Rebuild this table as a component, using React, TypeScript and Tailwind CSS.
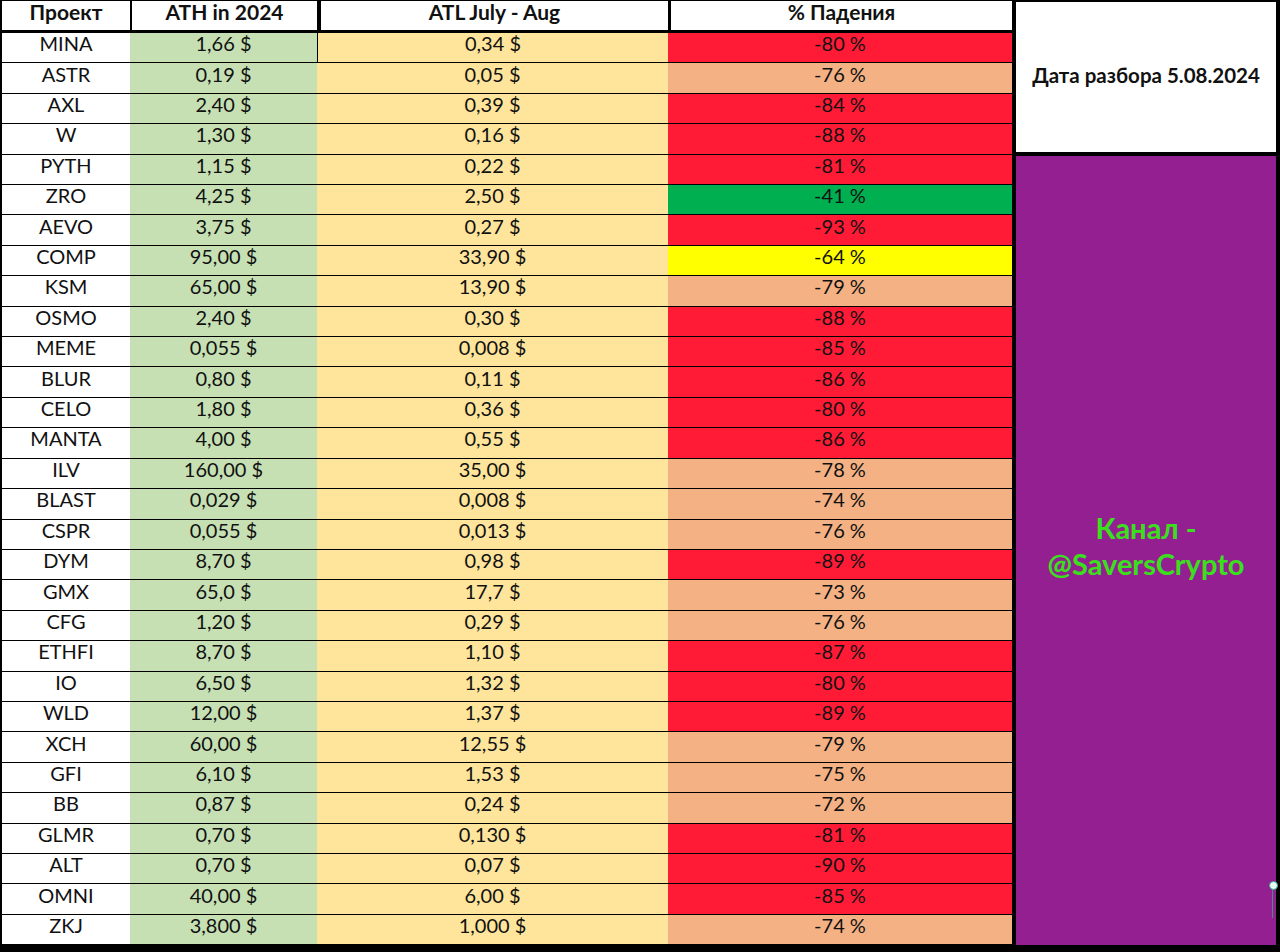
const rows: [string, string, string, string, string][] = [
  ["MINA", "1,66 $", "0,34 $", "-80 %", "r"],
  ["ASTR", "0,19 $", "0,05 $", "-76 %", "s"],
  ["AXL", "2,40 $", "0,39 $", "-84 %", "r"],
  ["W", "1,30 $", "0,16 $", "-88 %", "r"],
  ["PYTH", "1,15 $", "0,22 $", "-81 %", "r"],
  ["ZRO", "4,25 $", "2,50 $", "-41 %", "g"],
  ["AEVO", "3,75 $", "0,27 $", "-93 %", "r"],
  ["COMP", "95,00 $", "33,90 $", "-64 %", "y"],
  ["KSM", "65,00 $", "13,90 $", "-79 %", "s"],
  ["OSMO", "2,40 $", "0,30 $", "-88 %", "r"],
  ["MEME", "0,055 $", "0,008 $", "-85 %", "r"],
  ["BLUR", "0,80 $", "0,11 $", "-86 %", "r"],
  ["CELO", "1,80 $", "0,36 $", "-80 %", "r"],
  ["MANTA", "4,00 $", "0,55 $", "-86 %", "r"],
  ["ILV", "160,00 $", "35,00 $", "-78 %", "s"],
  ["BLAST", "0,029 $", "0,008 $", "-74 %", "s"],
  ["CSPR", "0,055 $", "0,013 $", "-76 %", "s"],
  ["DYM", "8,70 $", "0,98 $", "-89 %", "r"],
  ["GMX", "65,0 $", "17,7 $", "-73 %", "s"],
  ["CFG", "1,20 $", "0,29 $", "-76 %", "s"],
  ["ETHFI", "8,70 $", "1,10 $", "-87 %", "r"],
  ["IO", "6,50 $", "1,32 $", "-80 %", "r"],
  ["WLD", "12,00 $", "1,37 $", "-89 %", "r"],
  ["XCH", "60,00 $", "12,55 $", "-79 %", "s"],
  ["GFI", "6,10 $", "1,53 $", "-75 %", "s"],
  ["BB", "0,87 $", "0,24 $", "-72 %", "s"],
  ["GLMR", "0,70 $", "0,130 $", "-81 %", "r"],
  ["ALT", "0,70 $", "0,07 $", "-90 %", "r"],
  ["OMNI", "40,00 $", "6,00 $", "-85 %", "r"],
  ["ZKJ", "3,800 $", "1,000 $", "-74 %", "s"],
]

// drop colour classes, written out in full
const dropBg: Record<string, string> = {
  r: "bg-[#ff1b36]",
  s: "bg-[#f4b183]",
  g: "bg-[#00b050]",
  y: "bg-[#ffff00]",
}

const cell = "flex items-center justify-center pb-[9px]"

export default function App() {
  return (
    <div
      className="relative w-[1280px] h-[952px] bg-black flex pb-[7px] pr-[4px] text-[#111]"
      style={{ fontFamily: "Lato, 'Open Sans', sans-serif" }}
    >
      {/* table */}
      <div className="w-[1012px] flex flex-col pl-[2px]">
        {/* header */}
        <div className="h-[30px] pt-[1px] flex font-bold text-[21px] leading-none">
          <div className={"w-[128px] bg-white " + cell}>Проект</div>
          <div className={"w-[185px] ml-[2px] bg-white " + cell}>ATH in 2024</div>
          <div className={"w-[347px] ml-[4px] bg-white " + cell}>ATL July - Aug</div>
          <div className={"flex-1 ml-[3px] bg-white " + cell}>% Падения</div>
        </div>
        <div className="h-[3px]" />

        {/* body */}
        <div className="flex-1 flex flex-col bg-black gap-[1px] pb-[1px] text-[20px] leading-none">
          {rows.map(([name, ath, atl, drop, c], i) => (
            <div key={name} className="flex-1 flex">
              <div className={"w-[128px] bg-white " + cell}>{name}</div>
              <div className={"w-[187px] bg-[#c6e0b4] " + cell}>{ath}</div>
              <div
                className={
                  "w-[351px] bg-[#fee59b] " + cell + (i === 0 ? " border-l border-black" : "")
                }
              >
                {atl}
              </div>
              <div className={"flex-1 " + cell + " " + dropBg[c]}>{drop}</div>
            </div>
          ))}
        </div>
      </div>

      {/* right panel */}
      <div className="ml-[4px] flex-1 flex flex-col">
        <div className="h-[150px] mt-[2px] pb-[4px] bg-white flex items-center justify-center font-bold text-[20.5px]">
          Дата разбора 5.08.2024
        </div>
        <div className="flex-1 mt-[4px] pb-[10px] bg-[#931f91] flex items-center justify-center text-center font-bold text-[29px] leading-[36px] text-[#3ae01c]">
          <div>
            Канал -
            <br />
            @SaversCrypto
          </div>
        </div>
      </div>

      {/* selection handle at the right edge */}
      <div className="absolute left-[1272px] top-[886px] w-[1px] h-[32px] bg-[#4a8c8c]" />
      <div className="absolute left-[1269px] top-[881px] w-[9px] h-[9px] rounded-full bg-[#e8fff4] border border-[#3aa58a]" />
    </div>
  )
}
